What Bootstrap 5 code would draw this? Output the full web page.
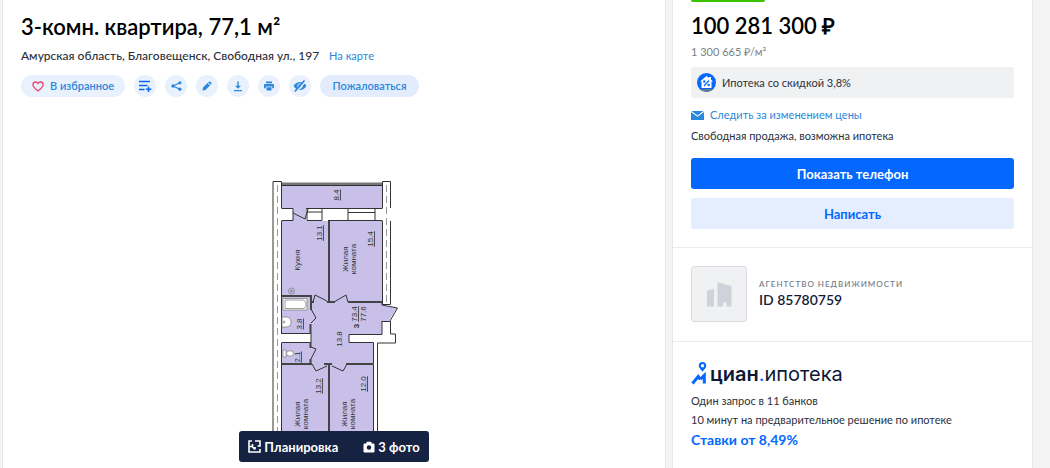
<!DOCTYPE html>
<html lang="ru">
<head>
<meta charset="utf-8">
<meta name="viewport" content="width=device-width, initial-scale=1">
<title>3-комн. квартира, 77,1 м²</title>
<link href="https://cdn.jsdelivr.net/npm/bootstrap@5.3.0/dist/css/bootstrap.min.css" rel="stylesheet">
<style>
body{background:#f4f4f4;font-family:Lato,"Open Sans",sans-serif;font-size:11px;line-height:16px;color:#2b303b}
a{color:#2b87db;text-decoration:none}
.page{gap:6px;padding:0 17px 0 2px;min-height:100vh}
.panel{background:#fff;border:1px solid #e4e6e9;border-width:0 1px}
.offer-side{width:361px}
.offer-head{padding:12px 18px 0}
.title{font-size:22px;line-height:30px;font-weight:600;color:#000;margin:0}
.address{font-size:12px;line-height:20px;margin-top:4px;gap:10px;font-weight:500}
.address a{font-size:11px;font-weight:400}
.tools{gap:9px;margin-top:9px}
.tool{background:#e8f1fc;color:#2b87db;border:0;border-radius:11px;height:22px;width:22px;padding:0;display:flex;align-items:center;justify-content:center;font-weight:600;font-size:11px;line-height:16px}
.tool-fav{width:104px;gap:6px}
.tool-report{width:99px;background:#e3ecfd}
.gallery{min-height:371px;padding-top:78px}
.plan{width:150px;height:257px}
.plan text{font-family:"Liberation Sans",sans-serif;font-size:8px;fill:#333;text-anchor:middle}
.media-tabs{bottom:6px;background:#152242;border-radius:3px;height:31px;width:190px;gap:25px}
.media-tabs button{background:none;border:0;padding:0;color:#fff;font-weight:700;font-size:13px;line-height:20px;gap:3px}
.price-box{padding:0 18px 18px 18px}
.promo{width:74px;height:2px;background:#3cc300;border-radius:0 0 2px 2px}
.price{font-size:22px;line-height:30px;font-weight:600;color:#000;margin-top:9px}
.per-meter{font-size:11px;line-height:16px;color:#7a7f87;margin-top:3px}
.discount{background:#f0f1f3;border-radius:3px;height:31px;margin-top:7px;padding-left:6px;gap:6px}
.follow{gap:6px;margin-top:9px}
.terms{margin-top:5px}
.cta{border:0;border-radius:3px;height:31px;width:100%;font-size:13px;line-height:20px;font-weight:700}
.cta-main{background:#0468ff;color:#fff;margin-top:14px}
.cta-soft{background:#e4eeff;color:#0468ff;margin-top:9px}
.block{border-top:1px solid #e9ebee;padding:18px}
.agency{gap:12px;padding-bottom:19px}
.logo-box{width:56px;height:56px;background:#f0f1f3;border:1px solid #d9dbe0;border-radius:3px}
.agency-kind{font-size:8px;line-height:12px;letter-spacing:1px;color:#7a7f8c;font-weight:600}
.agency-id{font-size:14px;line-height:20px;font-weight:600;color:#121c38}
.mortgage{padding-top:17px}
.brand{font-family:Inter,Roboto,sans-serif;font-size:20px;line-height:30px;color:#0e1738;gap:3px}
.brand b{font-weight:600}
.brand i{font-style:normal;color:#0468ff}
.mortgage p{font-size:11px;line-height:16px;margin:0 0 3px}
.mortgage .rate{font-size:14px;line-height:18px;font-weight:700;color:#0468ff;margin:0}
</style>
</head>
<body>
<div class="page d-flex">
  <main class="panel flex-grow-1 d-flex flex-column">
    <header class="offer-head">
      <h1 class="title">3-комн. квартира, 77,1 м²</h1>
      <div class="address d-flex align-items-center"><span>Амурская область, Благовещенск, Свободная ул., 197</span><a href="#map">На карте</a></div>
      <div class="tools d-flex">
        <button class="tool tool-fav" type="button"><svg width="12" height="11" viewBox="0 0 12 11" fill="none" stroke="#e8426b" stroke-width="1.3"><path d="M6 9.9C3.5 8 .9 6.2.9 3.8.9 2.100 2.100 1 3.500 1 4.600 1 5.500 1.600 6 2.500 6.500 1.600 7.400 1 8.500 1 9.900 1 11.100 2.100 11.100 3.800 11.100 6.200 8.500 8 6 9.900Z"/></svg>В избранное</button>
        <button class="tool" type="button" aria-label="Сравнить"><svg width="14" height="12" viewBox="0 0 14 12" fill="none" stroke="#0468ff" stroke-width="1.500"><path d="M1 1.500H12M1 5.500H9.500M1 9.500H6.500M10.500 6.500V12M7.800 9.300H13.300"/></svg></button>
        <button class="tool" type="button" aria-label="Поделиться"><svg width="11" height="10" viewBox="0 0 11 10" fill="#2b87db"><path d="M9 1.800 2 5 9 8.200" fill="none" stroke="#2b87db" stroke-width="1.200"/><circle cx="8.900" cy="1.800" r="1.600"/><circle cx="2" cy="5" r="1.700"/><circle cx="8.900" cy="8.200" r="1.600"/></svg></button>
        <button class="tool" type="button" aria-label="Заметка"><svg width="10" height="10" viewBox="0 0 10 10" fill="#2b87db"><path d="M.5 9.500 1 6.600 5.600 2 8 4.400 3.400 9ZM6.200 1.400 7.100.6Q7.700.2 8.300.8L9.300 1.800Q9.800 2.400 9.300 3L8.600 3.800Z"/></svg></button>
        <button class="tool" type="button" aria-label="Скачать"><svg width="10" height="11" viewBox="0 0 10 11" fill="#2b87db"><path d="M4.300.5H5.700V4.800H8L5 7.800 2 4.800H4.300ZM1 9H9V10.300H1Z"/></svg></button>
        <button class="tool" type="button" aria-label="Печать"><svg width="10" height="10" viewBox="0 0 10 10" fill="#2b87db"><path d="M2 .5H8V2.300H2ZM1 3H9Q10 3 10 4V7.300H8.300V5.500H1.700V7.300H0V4Q0 3 1 3ZM2.500 6.300H7.500V9.500H2.500Z"/></svg></button>
        <button class="tool" type="button" aria-label="Скрыть"><svg width="14" height="12" viewBox="0 0 14 12"><path d="M.6 6Q3 2 7 2T13.400 6Q11 10 7 10T.6 6Z" fill="#2b87db"/><circle cx="7" cy="6" r="2.300" fill="none" stroke="#e8f1fc"/><path d="M3.200 12 12.500 1.500" stroke="#e8f1fc" stroke-width="1.500"/><path d="M1.800 11.500 11.500.5" stroke="#2b87db" stroke-width="1.600"/></svg></button>
        <button class="tool tool-report" type="button">Пожаловаться</button>
      </div>
    </header>
    <section class="gallery position-relative d-flex justify-content-center align-items-start flex-grow-1">
      <svg class="plan" viewBox="259 175 150 257" role="img" aria-label="Планировка квартиры">
        <!-- room fills -->
        <g fill="#c8c0e8">
          <path d="M282 186H382V208H306V221H293V208H282Z"/>
          <path d="M282 221H328V302H312V296H282Z"/>
          <path d="M330 221H382V302H330Z"/>
          <path d="M282 297H310V302H382V305L397 308 389 321H382V334H349V343H373V364H311V363H282V343H311V334H282Z"/>
          <path d="M282 365H328V432H282ZM330 365H373V432H330Z"/>
          <path d="M312 363H324V366H312ZM332 363H346V366H332ZM314 301H348V304H314Z"/>
        </g>
        <!-- outer walls -->
        <g fill="none" stroke="#333" stroke-width="1">
          <path d="M273 432V181.500H281.500V208M281.500 221V334M281.500 343V432M382.500 208V181.500H390.500V208M390.500 221V304.500H382.500V221"/>
          <path d="M281.500 208.500H293V214M306 208.500H382.500M281.500 220.500H293V214M322 208V220.500H307V208M307 212H322M348 208V220.500M348 212.500H375M375 208V220.500H348M328 220.500H382.500"/>
          <path d="M382 305V301M382 321.500H390.500V334H395.500V343H377.500V432M382 321V334.500H349V342.500H373.500V432M281.500 333.500H311V342.500H281.500"/>
          <path d="M382 305 397.500 308 390 321M293 213 305 219 308 209M313 302 315 295 327 301M334 302 346 295 348 302M311 309 316 318 311 323M311 347 316 349 311 359M312 364 316 371 327 366M332 366 343 371 347 364"/>
        </g>
        <path d="M282 184H382" stroke="#777" stroke-width="3"/>
        <path d="M282 185.500H382" stroke="#333"/>
        <g stroke="#444" stroke-width="2" fill="none">
          <path d="M329 221V301M282 296H311V310M310.500 324V334M329 365V432M282 364H312M324 364H332M346 364H374M310.500 342V348M310.500 359V364M348 302H382M327 302H335M311 302H314"/>
        </g>
        <path d="M277.500 185V432M386.500 185V302" stroke="#999" stroke-dasharray="7 4"/>
        <!-- plumbing -->
        <g fill="#fff" stroke="#777" stroke-width=".7">
          <path d="M283 298.500H307V310H283Z"/><path d="M285 300H302Q306 300 306 304.500T302 308.500H285Z"/>
          <path d="M282 317H286Q291 317 291 322T286 327H282Z"/><circle cx="284" cy="322" r="1"/>
          <path d="M283 350H286V357H283Z"/><ellipse cx="290" cy="353.500" rx="3.500" ry="2.800"/>
          <circle cx="291.500" cy="291" r="3" fill="none"/><path d="M290 291H293M291.500 289.500V292.500"/>
        </g>
        <g>
          <text transform="translate(339 195) rotate(-90)" text-decoration="underline">8.4</text>
          <text transform="translate(322 233) rotate(-90)" text-decoration="underline">13.1</text>
          <text transform="translate(373 239) rotate(-90)" text-decoration="underline">15.4</text>
          <text transform="translate(300 260) rotate(-90)">Кухня</text>
          <text transform="translate(348 259) rotate(-90)">Жилая</text>
          <text transform="translate(356 259) rotate(-90)">комната</text>
          <text transform="translate(302 324) rotate(-90)" text-decoration="underline">3.8</text>
          <text transform="translate(300 357) rotate(-90)" text-decoration="underline">2.1</text>
          <text transform="translate(342 339) rotate(-90)">13.8</text>
          <text transform="translate(357 314) rotate(-90)" text-decoration="underline">73.4</text>
          <text transform="translate(366 314) rotate(-90)">77.6</text>
          <text transform="translate(359 326) rotate(-90)" font-weight="700">3</text>
          <text transform="translate(321 386) rotate(-90)" text-decoration="underline">13.2</text>
          <text transform="translate(366 384) rotate(-90)" text-decoration="underline">12.0</text>
          <text transform="translate(300 414) rotate(-90)">Жилая</text>
          <text transform="translate(308 414) rotate(-90)">комната</text>
          <text transform="translate(347 414) rotate(-90)">Жилая</text>
          <text transform="translate(355 414) rotate(-90)">комната</text>
        </g>
      </svg>
      <div class="media-tabs position-absolute d-flex justify-content-center align-items-center">
        <button type="button" class="d-flex align-items-center"><svg width="13" height="13" viewBox="0 0 13 13" fill="none" stroke="#fff" stroke-width="1.600"><path d="M4 1H1V12H12V9M7 1H12V6H9.500M1 6.500H4.500M4.500 4V7L7 9.500M7 9.500V7"/></svg>Планировка</button>
        <button type="button" class="d-flex align-items-center"><svg width="12" height="12" viewBox="0 0 12 12"><path d="M1.500 2.500H3L4 .8H8L9 2.500H10.500Q11.500 2.500 11.500 3.500V10.500Q11.500 11.500 10.500 11.500H1.500Q.5 11.500.5 10.500V3.500Q.5 2.500 1.500 2.500Z" fill="#fff"/><circle cx="6" cy="6.500" r="2.200" fill="#152242"/></svg>3 фото</button>
      </div>
    </section>
  </main>
  <aside class="panel offer-side flex-shrink-0">
    <section class="price-box">
      <div class="promo"></div>
      <div class="price">100 281 300 ₽</div>
      <div class="per-meter">1 300 665 ₽/м²</div>
      <div class="discount d-flex align-items-center"><svg width="19" height="19" viewBox="0 0 19 19"><circle cx="9.500" cy="9.500" r="9.500" fill="#0468ff"/><path d="M2.500 16H16.500Q13.500 19 9.500 19T2.500 16Z" fill="#6c7896"/><path d="M9.500 3 12 5V4H14V6.600L16 8.500H14.500V15H4.500V8.500H3Z" fill="#fff"/><path d="M7 13 12 7.500" stroke="#0468ff" stroke-width="1.200"/><circle cx="7.300" cy="8.500" r="1.200" fill="#0468ff"/><circle cx="11.700" cy="12" r="1.200" fill="#0468ff"/></svg>Ипотека со скидкой 3,8%</div>
      <a href="#follow" class="follow d-flex align-items-center"><svg width="13" height="9" viewBox="0 0 13 9" fill="#2b87db"><path d="M.5 0H12.500L6.500 4.500ZM0 1 6.500 5.800 13 1V9H0Z"/></svg>Следить за изменением цены</a>
      <div class="terms">Свободная продажа, возможна ипотека</div>
      <button type="button" class="cta cta-main">Показать телефон</button>
      <button type="button" class="cta cta-soft">Написать</button>
    </section>
    <section class="block agency d-flex align-items-center">
      <div class="logo-box d-flex align-items-center justify-content-center"><svg width="26" height="25" viewBox="0 0 26 25" fill="#cfd2db"><path d="M1 8.500 8 7V24.500H1ZM11.500 0 25.500 4V24.500H20.500V20.500H17V24.500H11.500Z"/></svg></div>
      <div><div class="agency-kind">АГЕНТСТВО НЕДВИЖИМОСТИ</div><div class="agency-id">ID 85780759</div></div>
    </section>
    <section class="block mortgage">
      <div class="brand d-flex align-items-center"><svg width="16" height="24" viewBox="0 0 16 24" fill="none" stroke="#0468ff"><path d="M11.500 0A3.700 3.700 0 0 0 7.800 3.700C7.800 6 11.500 9.500 11.500 9.500S15.200 6 15.200 3.700A3.700 3.700 0 0 0 11.500 0Z" fill="#0468ff" stroke="none"/><circle cx="11.500" cy="3.700" r="1.700" fill="#fff" stroke="none"/><path d="M1.500 21.500 7.200 14.500 9.300 17.300M13.300 21.500V13.300L9.300 17.300" stroke-width="3"/></svg><span><b>циан</b><i>.</i>ипотека</span></div>
      <p class="mt-1">Один запрос в 11 банков</p>
      <p>10 минут на предварительное решение по ипотеке</p>
      <p class="rate">Ставки от 8,49%</p>
    </section>
  </aside>
</div>
<script src="https://cdn.jsdelivr.net/npm/bootstrap@5.3.0/dist/js/bootstrap.bundle.min.js"></script>
</body>
</html>
